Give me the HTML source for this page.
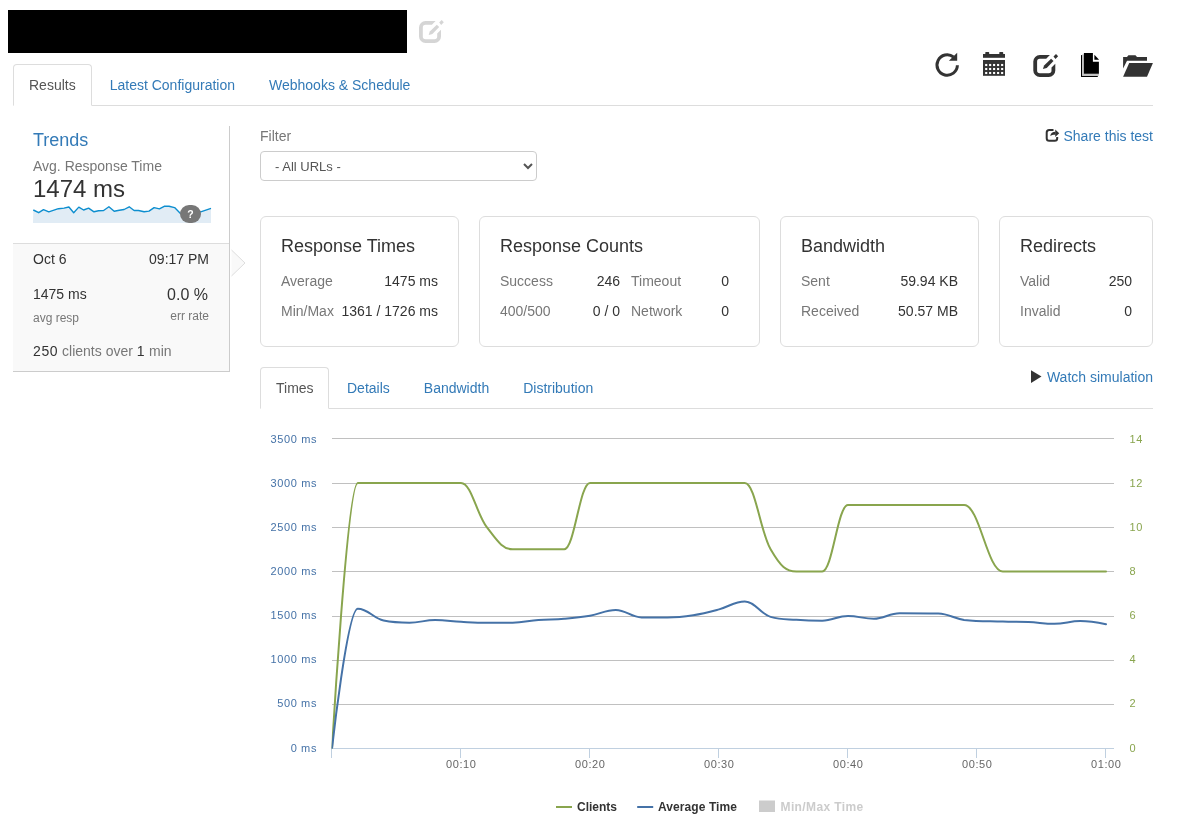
<!DOCTYPE html>
<html lang="en">
<head>
<meta charset="utf-8">
<title>Load test results</title>
<style>
html,body{margin:0;padding:0;background:#fff;overflow:hidden}
body{width:1186px;height:819px;position:relative;overflow:hidden;font-family:"Liberation Sans",sans-serif;font-size:14px;line-height:20px;color:#333}
a{color:#337ab7;text-decoration:none}
#w{position:absolute;left:0;top:0;width:1186px;height:819px;will-change:transform}
.abs{position:absolute}
.muted{color:#777}
ul.nav{position:absolute;list-style:none;margin:0;padding:0;border-bottom:1px solid #ddd;height:41px}
ul.nav li{float:left;margin-bottom:-1px}
ul.nav li a{display:block;padding:10px 15px;margin-right:2px;border:1px solid transparent;border-radius:4px 4px 0 0;line-height:20px}
ul.nav li.active a{color:#555;background:#fff;border-color:#ddd;border-bottom-color:#fff}
.card{position:absolute;top:216px;height:129px;border:1px solid #ddd;border-radius:6px;background:#fff;box-sizing:content-box}
.card h4{position:absolute;left:20px;top:17px;margin:0;font-size:18px;font-weight:normal;line-height:24px;color:#333;white-space:nowrap}
.card .r{position:absolute;left:20px;right:20px;height:20px;white-space:nowrap}
.card .r1{top:54px}
.card .r2{top:84px}
.card .l{position:absolute;left:0;color:#777}
.card .v{position:absolute;right:0;color:#333}
.t{position:absolute;white-space:nowrap}
select.f{position:absolute;left:260px;top:151px;width:277px;height:30px;box-sizing:border-box;margin:0;padding:4px 10px 4px 10px;font-family:"Liberation Sans",sans-serif;font-size:13px;line-height:20px;color:#555;background:#fff;border:1px solid #ccc;border-radius:4px}
</style>
</head>
<body>
<div id="w">

<!-- redacted title -->
<div class="abs" style="left:8px;top:10px;width:399px;height:43px;background:#000"></div>

<!-- top tabs -->
<ul class="nav" style="left:13px;top:64px;width:1140px">
<li class="active"><a>Results</a></li>
<li><a>Latest Configuration</a></li>
<li><a>Webhooks &amp; Schedule</a></li>
</ul>

<!-- sidebar -->
<div class="abs" style="left:229px;top:126px;width:1px;height:246px;background:#ccc"></div>
<div class="t" style="left:33px;top:130px;font-size:18px;line-height:20px;color:#337ab7">Trends</div>
<div class="t muted" style="left:33px;top:156px">Avg. Response Time</div>
<div class="t" style="left:33px;top:176px;font-size:24px;line-height:26px">1474 ms</div>
<svg class="abs" style="left:0;top:195px" width="240" height="35" viewBox="0 195 240 35">
<path d="M33.3 210.0 L38.7 212.7 L43.5 209.7 L48.8 211.8 L58.4 208.7 L64.0 208.1 L68.9 207.0 L73.7 212.7 L78.8 207.1 L83.6 210.0 L88.6 208.1 L94.0 211.8 L98.5 210.8 L103.6 210.5 L108.9 206.8 L114.2 211.3 L119.3 210.3 L124.1 209.5 L129.2 206.8 L134.1 210.5 L138.5 210.5 L144.1 211.8 L149.0 211.1 L154.1 207.6 L159.4 208.9 L164.2 206.3 L169.0 206.3 L174.6 207.6 L180.2 213.2 L185.8 214.0 L194.6 213.1 L200.7 211.8 L211.0 208.4 L211 223 L33 223 Z" fill="#e1ecf5"/>
<path d="M33.3 210.0 L38.7 212.7 L43.5 209.7 L48.8 211.8 L58.4 208.7 L64.0 208.1 L68.9 207.0 L73.7 212.7 L78.8 207.1 L83.6 210.0 L88.6 208.1 L94.0 211.8 L98.5 210.8 L103.6 210.5 L108.9 206.8 L114.2 211.3 L119.3 210.3 L124.1 209.5 L129.2 206.8 L134.1 210.5 L138.5 210.5 L144.1 211.8 L149.0 211.1 L154.1 207.6 L159.4 208.9 L164.2 206.3 L169.0 206.3 L174.6 207.6 L180.2 213.2 L185.8 214.0 L194.6 213.1 L200.7 211.8 L211.0 208.4" fill="none" stroke="#0d8ecf" stroke-width="1.4" stroke-linejoin="round"/>
</svg>
<div class="abs" style="left:180px;top:205px;width:21px;height:18px;border-radius:10px;background:#777;color:#fff;font-size:10.5px;font-weight:bold;line-height:19px;text-align:center">?</div>

<div class="abs" style="left:13px;top:243px;width:216px;height:127px;background:#f9f9f9;border-top:1px solid #ddd;border-bottom:1px solid #ccc"></div>
<svg class="abs" style="left:229px;top:245px" width="20" height="36" viewBox="229 245 20 36">
<path d="M231.5 250 L245 263 L231.5 276" fill="#f9f9f9" stroke="#ddd" stroke-width="1"/>
</svg>
<div class="t" style="left:33px;top:249px">Oct 6</div>
<div class="t" style="right:977px;top:249px">09:17 PM</div>
<div class="t" style="left:33px;top:284px">1475 ms</div>
<div class="t" style="right:978px;top:285px;font-size:16px">0.0 %</div>
<div class="t muted" style="left:33px;top:308px;font-size:12px">avg resp</div>
<div class="t muted" style="right:977px;top:306px;font-size:12px">err rate</div>
<div class="t muted" style="left:33px;top:341px"><span style="color:#333;letter-spacing:.6px">250</span> clients over <span style="color:#333;letter-spacing:.6px">1</span> min</div>

<!-- main column -->
<div class="t muted" style="left:260px;top:126px">Filter</div>
<select class="f"><option>- All URLs -</option></select>
<div class="t" style="right:33px;top:126px"><a>Share this test</a></div>

<div class="card" style="left:260px;width:197px">
<h4>Response Times</h4>
<div class="r r1"><span class="l">Average</span><span class="v">1475 ms</span></div>
<div class="r r2"><span class="l">Min/Max</span><span class="v">1361 / 1726 ms</span></div>
</div>
<div class="card" style="left:479px;width:279px">
<h4>Response Counts</h4>
<div class="r r1"><span class="l">Success</span><span class="v" style="right:119px">246</span><span class="l" style="left:131px">Timeout</span><span class="v" style="right:10px">0</span></div>
<div class="r r2"><span class="l">400/500</span><span class="v" style="right:119px">0 / 0</span><span class="l" style="left:131px">Network</span><span class="v" style="right:10px">0</span></div>
</div>
<div class="card" style="left:780px;width:197px">
<h4>Bandwidth</h4>
<div class="r r1"><span class="l">Sent</span><span class="v">59.94 KB</span></div>
<div class="r r2"><span class="l">Received</span><span class="v">50.57 MB</span></div>
</div>
<div class="card" style="left:999px;width:152px">
<h4>Redirects</h4>
<div class="r r1"><span class="l">Valid</span><span class="v">250</span></div>
<div class="r r2"><span class="l">Invalid</span><span class="v">0</span></div>
</div>

<!-- chart tabs -->
<ul class="nav" style="left:260px;top:367px;width:893px">
<li class="active"><a style="width:37px">Times</a></li>
<li><a>Details</a></li>
<li><a>Bandwidth</a></li>
<li><a>Distribution</a></li>
</ul>
<div class="t" style="right:33px;top:367px"><a>Watch simulation</a></div>

<svg class="abs" style="left:0;top:410px" width="1186" height="409" viewBox="0 410 1186 409">
<path d="M332 438.5 H1114" stroke="#c0c0c0" stroke-width="1" fill="none"/>
<path d="M332 483.5 H1114" stroke="#c0c0c0" stroke-width="1" fill="none"/>
<path d="M332 527.5 H1114" stroke="#c0c0c0" stroke-width="1" fill="none"/>
<path d="M332 571.5 H1114" stroke="#c0c0c0" stroke-width="1" fill="none"/>
<path d="M332 616.5 H1114" stroke="#c0c0c0" stroke-width="1" fill="none"/>
<path d="M332 660.5 H1114" stroke="#c0c0c0" stroke-width="1" fill="none"/>
<path d="M332 704.5 H1114" stroke="#c0c0c0" stroke-width="1" fill="none"/>
<path d="M331 748.5 H1114" stroke="#c0d0e0" stroke-width="1" fill="none"/>
<path d="M331.5 748 V758" stroke="#c0d0e0" stroke-width="1" fill="none"/>
<path d="M460.5 748 V758" stroke="#c0d0e0" stroke-width="1" fill="none"/>
<path d="M589.5 748 V758" stroke="#c0d0e0" stroke-width="1" fill="none"/>
<path d="M718.5 748 V758" stroke="#c0d0e0" stroke-width="1" fill="none"/>
<path d="M847.5 748 V758" stroke="#c0d0e0" stroke-width="1" fill="none"/>
<path d="M976.5 748 V758" stroke="#c0d0e0" stroke-width="1" fill="none"/>
<path d="M1105.5 748 V758" stroke="#c0d0e0" stroke-width="1" fill="none"/>
<clipPath id="plot"><rect x="331.5" y="437" width="783" height="311.5"/></clipPath>
<g clip-path="url(#plot)">
<path d="M332.00 748.60 C332.00 748.60 347.48 482.89 357.80 482.89 C368.12 482.89 373.28 482.89 383.60 482.89 C393.92 482.89 399.08 482.89 409.40 482.89 C419.72 482.89 424.88 482.89 435.20 482.89 C445.52 482.89 450.68 482.89 461.00 482.89 C471.32 482.89 476.48 513.89 486.80 527.17 C497.12 540.46 502.28 549.31 512.60 549.31 C522.92 549.31 528.08 549.31 538.40 549.31 C548.72 549.31 553.88 549.31 564.20 549.31 C574.52 549.31 579.68 482.89 590.00 482.89 C600.32 482.89 605.48 482.89 615.80 482.89 C626.12 482.89 631.28 482.89 641.60 482.89 C651.92 482.89 657.08 482.89 667.40 482.89 C677.72 482.89 682.88 482.89 693.20 482.89 C703.52 482.89 708.68 482.89 719.00 482.89 C729.32 482.89 734.48 482.89 744.80 482.89 C755.12 482.89 760.28 531.60 770.60 549.31 C780.92 567.03 786.08 571.46 796.40 571.46 C806.72 571.46 811.88 571.46 822.20 571.46 C832.52 571.46 837.68 505.03 848.00 505.03 C858.32 505.03 863.48 505.03 873.80 505.03 C884.12 505.03 889.28 505.03 899.60 505.03 C915.08 505.03 922.82 505.03 938.30 505.03 C948.62 505.03 953.78 505.03 964.10 505.03 C979.58 505.03 987.32 571.46 1002.80 571.46 C1013.12 571.46 1018.28 571.46 1028.60 571.46 C1038.92 571.46 1044.08 571.46 1054.40 571.46 C1064.72 571.46 1069.88 571.46 1080.20 571.46 C1090.52 571.46 1106.00 571.46 1106.00 571.46" stroke="#89a54e" stroke-width="2" fill="none" stroke-linejoin="round" stroke-linecap="round"/>
<path d="M332.00 748.40 C332.00 748.40 347.48 608.70 357.80 608.70 C368.12 608.70 373.28 618.33 383.60 620.50 C393.92 622.67 399.08 622.67 409.40 622.67 C419.72 622.67 424.88 620.10 435.20 620.10 C445.52 620.10 450.68 621.26 461.00 621.80 C471.32 622.34 476.48 622.80 486.80 622.80 C497.12 622.80 502.28 622.80 512.60 622.67 C522.92 622.54 528.08 620.87 538.40 620.10 C548.72 619.33 553.88 619.67 564.20 618.80 C574.52 617.93 579.68 617.52 590.00 615.76 C600.32 614.00 605.48 610.00 615.80 610.00 C626.12 610.00 631.28 617.44 641.60 617.44 C651.92 617.44 657.08 617.44 667.40 617.44 C677.72 617.44 682.88 616.82 693.20 615.20 C703.52 613.58 708.68 612.11 719.00 609.35 C729.32 606.59 734.48 601.40 744.80 601.40 C755.12 601.40 760.28 614.00 770.60 616.90 C780.92 619.80 786.08 619.05 796.40 619.80 C806.72 620.55 811.88 620.65 822.20 620.65 C832.52 620.65 837.68 615.93 848.00 615.93 C858.32 615.93 863.48 618.80 873.80 618.80 C884.12 618.80 889.28 613.30 899.60 613.30 C915.08 613.30 922.82 613.30 938.30 613.60 C948.62 613.90 953.78 618.40 964.10 620.00 C979.58 621.60 987.32 621.10 1002.80 621.60 C1013.12 621.94 1018.28 621.66 1028.60 622.10 C1038.92 622.54 1044.08 623.80 1054.40 623.80 C1064.72 623.80 1069.88 621.00 1080.20 621.00 C1090.52 621.00 1106.00 624.30 1106.00 624.30" stroke="#4572a7" stroke-width="2" fill="none" stroke-linejoin="round" stroke-linecap="round"/>
</g>
<g font-family="Liberation Sans, sans-serif" font-size="11" letter-spacing="0.6">
<text x="317" y="443" text-anchor="end" fill="#4572a7">3500 ms</text>
<text x="317" y="487" text-anchor="end" fill="#4572a7">3000 ms</text>
<text x="317" y="531" text-anchor="end" fill="#4572a7">2500 ms</text>
<text x="317" y="575" text-anchor="end" fill="#4572a7">2000 ms</text>
<text x="317" y="619" text-anchor="end" fill="#4572a7">1500 ms</text>
<text x="317" y="663" text-anchor="end" fill="#4572a7">1000 ms</text>
<text x="317" y="707" text-anchor="end" fill="#4572a7">500 ms</text>
<text x="317" y="752" text-anchor="end" fill="#4572a7">0 ms</text>
<text x="1129.5" y="443" fill="#89a54e">14</text>
<text x="1129.5" y="487" fill="#89a54e">12</text>
<text x="1129.5" y="531" fill="#89a54e">10</text>
<text x="1129.5" y="575" fill="#89a54e">8</text>
<text x="1129.5" y="619" fill="#89a54e">6</text>
<text x="1129.5" y="663" fill="#89a54e">4</text>
<text x="1129.5" y="707" fill="#89a54e">2</text>
<text x="1129.5" y="752" fill="#89a54e">0</text>
<text x="461.3" y="768" text-anchor="middle" fill="#666">00:10</text>
<text x="590.3" y="768" text-anchor="middle" fill="#666">00:20</text>
<text x="719.3" y="768" text-anchor="middle" fill="#666">00:30</text>
<text x="848.3" y="768" text-anchor="middle" fill="#666">00:40</text>
<text x="977.3" y="768" text-anchor="middle" fill="#666">00:50</text>
<text x="1106.3" y="768" text-anchor="middle" fill="#666">01:00</text>
</g>
<g font-family="Liberation Sans, sans-serif" font-size="12" font-weight="bold">
<path d="M556 807 H572" stroke="#89a54e" stroke-width="2"/>
<text x="577" y="810.6" fill="#333">Clients</text>
<path d="M637.2 807 H653.2" stroke="#4572a7" stroke-width="2"/>
<text x="658" y="810.6" fill="#333" letter-spacing="0.08">Average Time</text>
<rect x="759" y="800.5" width="16" height="11.5" fill="#ccc"/>
<text x="780.5" y="810.6" fill="#ccc" letter-spacing="0.38">Min/Max Time</text>
</g>
</svg>

<svg class="abs" style="left:0;top:0;pointer-events:none" width="1186" height="400" viewBox="0 0 1186 400">

<!-- title edit (disabled look) -->
<g transform="translate(419 21)" fill="#d5d5d5">
<path d="M16.6 0 H6.5 A6.5 6.5 0 0 0 0 6.5 V15.5 A6.5 6.5 0 0 0 6.5 22 H15.5 A6.5 6.5 0 0 0 22 15.5 V8.7 L18.2 12.6 V15.5 A2.7 2.7 0 0 1 15.5 18.2 H6.5 A2.7 2.7 0 0 1 3.8 15.5 V6.5 A2.7 2.7 0 0 1 6.5 3.8 H12.9 Z"/>
<path d="M17.8 3.7 L20.2 5.9 L13.4 12.9 L9.6 14.1 L10.8 10.5 Z"/>
<path d="M22.7 -1 L24.8 1.2 L22.2 3.9 L20.2 1.6 Z"/>
</g>

<!-- refresh -->
<path d="M957.4 65.3 A10.2 10.2 0 1 1 953.5 57" fill="none" stroke="#333" stroke-width="3"/>
<path d="M957.2 52.8 V60.8 H948.9 Z" fill="#333"/>

<!-- calendar -->
<g fill="#333">
<rect x="983" y="54" width="22" height="3.8"/>
<rect x="985.3" y="52.1" width="3.9" height="2.4" rx="0.6"/>
<rect x="999.3" y="52.1" width="3.9" height="2.4" rx="0.6"/>
<rect x="983" y="60" width="22" height="15.8"/>
</g>
<g fill="#fff">
<rect x="985.15" y="63.95" width="2.1" height="2.1"/><rect x="989.1" y="63.95" width="2.1" height="2.1"/><rect x="993.05" y="63.95" width="2.1" height="2.1"/><rect x="997.05" y="63.95" width="2.1" height="2.1"/><rect x="1001.1" y="63.95" width="2.1" height="2.1"/>
<rect x="985.15" y="67.95" width="2.1" height="2.1"/><rect x="989.1" y="67.95" width="2.1" height="2.1"/><rect x="993.05" y="67.95" width="2.1" height="2.1"/><rect x="997.05" y="67.95" width="2.1" height="2.1"/><rect x="1001.1" y="67.95" width="2.1" height="2.1"/>
<rect x="985.15" y="71.95" width="2.1" height="2.1"/><rect x="989.1" y="71.95" width="2.1" height="2.1"/><rect x="993.05" y="71.95" width="2.1" height="2.1"/><rect x="997.05" y="71.95" width="2.1" height="2.1"/><rect x="1001.1" y="71.95" width="2.1" height="2.1"/>
</g>

<!-- edit -->
<g transform="translate(1033.3 55)" fill="#333">
<path d="M16.6 0 H6.5 A6.5 6.5 0 0 0 0 6.5 V15.5 A6.5 6.5 0 0 0 6.5 22 H15.5 A6.5 6.5 0 0 0 22 15.5 V8.7 L18.2 12.6 V15.5 A2.7 2.7 0 0 1 15.5 18.2 H6.5 A2.7 2.7 0 0 1 3.8 15.5 V6.5 A2.7 2.7 0 0 1 6.5 3.8 H12.9 Z"/>
<path d="M17.8 3.7 L20.2 5.9 L13.4 12.9 L9.6 14.1 L10.8 10.5 Z"/>
<path d="M22.7 -1 L24.8 1.2 L22.2 3.9 L20.2 1.6 Z"/>
</g>

<!-- duplicate -->
<path d="M1081 55.5 Q1081 55 1081.5 55 H1082.2 V75.8 H1097.8 V77 H1081.6 Q1081 77 1081 76.4 Z" fill="#000"/>
<path d="M1082.1 54.5 H1084 V73.8 H1098.9 V75.8 H1082.1 Z" fill="#c4c4c4"/>
<path d="M1083.9 53.1 H1092.9 V61.85 H1098.9 V73.8 H1083.9 Z" fill="#000"/>
<path d="M1094.4 54.8 V59.65 H1099.1 Z" fill="#000"/>

<!-- folder open -->
<path d="M1123.1 57 H1127 L1128.4 55.2 H1135.5 L1137 57 H1147 V60.7 H1127 L1123.1 68.4 Z" fill="#333"/>
<path d="M1129.2 63.1 H1152.9 L1147 76.75 H1123.1 Z" fill="#333"/>

<!-- share -->
<path d="M1053.5 130 H1049.2 A2.5 2.5 0 0 0 1046.7 132.5 V138.3 A2.5 2.5 0 0 0 1049.2 140.8 H1054.7 A2.5 2.5 0 0 0 1057.2 138.3 V137.1" fill="none" stroke="#333" stroke-width="2"/>
<path d="M1059.2 133.3 L1055.25 129.6 V136.9 Z" fill="#333"/>
<path d="M1050.2 136 C1050.8 133 1052.5 131.8 1055.5 131.8 V134.7 C1053 134.7 1051.5 135 1050.2 136 Z" fill="#333"/>

<!-- play -->
<path d="M1031 370.3 V382.9 L1041.5 376.6 Z" fill="#333"/>
</svg>


</div>
</body>
</html>
